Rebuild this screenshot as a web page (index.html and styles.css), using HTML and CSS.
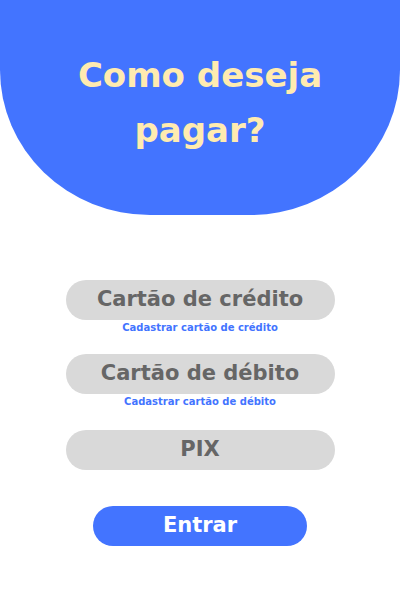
FILE: index.html
```html
<!DOCTYPE html>
<html lang="pt-BR">
<head>
<meta charset="utf-8">
<title>Como deseja pagar?</title>
<link rel="stylesheet" href="styles.css">
</head>
<body>
<header class="hero">
  <h1 class="hero-title">Como deseja<br>pagar?</h1>
</header>
<main class="options">
  <div class="option option-credit">
    <button class="pill">Cartão de crédito</button>
    <a class="link" href="#">Cadastrar cartão de crédito</a>
  </div>
  <div class="option option-debit">
    <button class="pill">Cartão de débito</button>
    <a class="link" href="#">Cadastrar cartão de débito</a>
  </div>
  <div class="option option-pix">
    <button class="pill">PIX</button>
  </div>
  <button class="submit">Entrar</button>
</main>
</body>
</html>
```
FILE: styles.css
```css
* { box-sizing: border-box; }
html, body { margin: 0; padding: 0; background: #ffffff; }
body {
  width: 400px;
  height: 600px;
  overflow: hidden;
  font-family: "DejaVu Sans", "Noto Sans", sans-serif;
}
.hero {
  height: 215px;
  background: #4374ff;
  border-radius: 0 0 150px 150px / 0 0 145px 145px;
  display: flex;
  justify-content: center;
  padding-top: 48px;
}
.hero-title {
  margin: 0;
  color: #ffebb0;
  font-size: 34px;
  font-weight: 700;
  line-height: 55px;
  text-align: center;
}
.options {
  display: flex;
  flex-direction: column;
  align-items: center;
  padding-top: 65px;
}
.option {
  display: flex;
  flex-direction: column;
  align-items: center;
}
.option-credit { margin-bottom: 18px; }
.option-debit { margin-bottom: 20px; }
.option-pix { margin-bottom: 36px; }
.pill {
  width: 269px;
  height: 40px;
  border: none;
  border-radius: 20px;
  background: #d9d9d9;
  color: #666666;
  font-family: inherit;
  font-size: 21px;
  font-weight: 700;
  padding: 0 0 3px;
  display: flex;
  align-items: center;
  justify-content: center;
}
.link {
  color: #4374ff;
  font-size: 10px;
  font-weight: 700;
  line-height: 16px;
  text-decoration: none;
}
.submit {
  width: 214px;
  height: 40px;
  border: none;
  border-radius: 20px;
  background: #4374ff;
  color: #ffffff;
  font-family: inherit;
  font-size: 21px;
  font-weight: 700;
  padding: 0 0 2px;
}
```
